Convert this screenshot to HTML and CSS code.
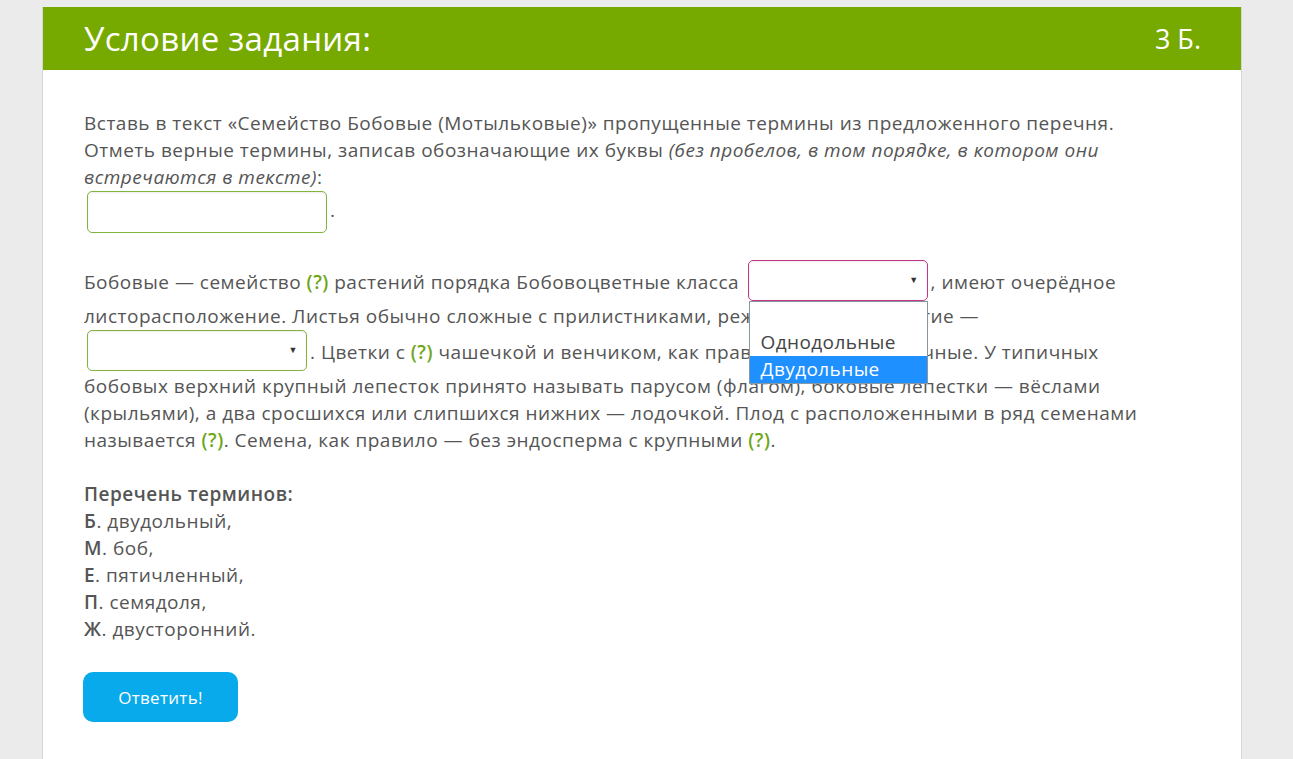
FILE: index.html
```html
<!DOCTYPE html>
<html lang="ru">
<head>
    <meta charset="UTF-8">
    <meta name="viewport" content="width=device-width, initial-scale=1.0">
    <title>Условие задания</title>
    <link rel="stylesheet" href="styles.css">
</head>
<body>
    <div class="task">
        <div class="task-head">
            <h1 class="task-title">Условие задания:</h1>
            <div class="task-score">3 Б.</div>
        </div>

        <div class="task-body">
            <p>
                Вставь в текст «Семейство Бобовые (Мотыльковые)» пропущенные термины из предложенного перечня.<br>
                Отметь верные термины, записав обозначающие их буквы <em>(без пробелов, в том порядке, в котором они встречаются в тексте)</em>:<br>
                <input type="text" class="answer-input">.
            </p>

            <p>
                Бобовые — семейство <span class="gap">(?)</span> растений порядка Бобовоцветные класса
                <span class="select-wrap">
                    <select class="gap-select gap-select-active" style="width: 180px;">
                        <option></option>
                        <option>Однодольные</option>
                        <option>Двудольные</option>
                    </select>
                    <span class="select-arrow">▼</span>
                    <!-- раскрытый список -->
                    <span class="dropdown">
                        <span class="dropdown-item"></span>
                        <span class="dropdown-item">Однодольные</span>
                        <span class="dropdown-item dropdown-item-hover">Двудольные</span>
                    </span>
                </span>, имеют очерёдное листорасположение. Листья обычно сложные с прилистниками, реже простые. Развитие —
                <span class="select-wrap">
                    <select class="gap-select" style="width: 220px;">
                        <option></option>
                    </select>
                    <span class="select-arrow">▼</span>
                </span>. Цветки с <span class="gap">(?)</span> чашечкой и венчиком, как правило, <span class="gap">(?)</span> симметричные. У типичных бобовых верхний крупный лепесток принято называть парусом (флагом), боковые лепестки — вёслами (крыльями), а два сросшихся или слипшихся нижних — лодочкой. Плод с расположенными в ряд семенами называется <span class="gap">(?)</span>. Семена, как правило — без эндосперма с крупными <span class="gap">(?)</span>.
            </p>

            <p>
                <b>Перечень терминов:</b><br>
                <b>Б</b>. двудольный,<br>
                <b>М</b>. боб,<br>
                <b>Е</b>. пятичленный,<br>
                <b>П</b>. семядоля,<br>
                <b>Ж</b>. двусторонний.
            </p>

            <button class="btn-answer">Ответить!</button>
        </div>
    </div>
</body>
</html>
```

FILE: styles.css
```css
* {
    margin: 0;
    padding: 0;
    box-sizing: border-box;
}

body {
    background: #ebebeb;
    font-family: "Open Sans", "Noto Sans", sans-serif;
    color: #555;
}

.task {
    width: 1200px;
    margin: 7px 0 0 42px;
    background: #fff;
    border-left: 1px solid #d6d6d6;
    border-right: 1px solid #d6d6d6;
    min-height: 760px;
}

/* шапка */
.task-head {
    display: flex;
    justify-content: space-between;
    align-items: center;
    height: 63px;
    padding: 0 40px 0 41px;
    background: #77aa00;
    color: #fff;
}
.task-title {
    font-size: 33px;
    font-weight: 400;
    letter-spacing: 0.3px;
}
.task-score {
    font-size: 27px;
}

/* текст задания */
.task-body {
    padding: 40px 60px 40px 41px;
    font-size: 19px;
    line-height: 27px;
    letter-spacing: 0.5px;
}
.task-body p {
    margin-bottom: 27px;
}
.task-body b {
    font-weight: 600;
}
.gap {
    color: #6ea617;
    font-weight: 600;
}

.answer-input {
    width: 240px;
    height: 42px;
    margin: 0 3px 0 3px;
    vertical-align: middle;
    border: 1px solid #82b33a;
    border-radius: 5px;
    box-shadow: inset 0 1px 2px rgba(0,0,0,0.08);
    font: inherit;
    padding: 0 10px;
}

.select-wrap {
    position: relative;
    display: inline-block;
    vertical-align: 8px;
    margin: 0 3px 2px;
    line-height: 0;
}
.gap-select {
    display: block;
    height: 41px;
    appearance: none;
    -webkit-appearance: none;
    background: #fff;
    border: 1px solid #82b33a;
    border-radius: 5px;
    box-shadow: inset 0 1px 2px rgba(0,0,0,0.08);
    font: inherit;
    color: #333;
    padding: 0 10px;
}
.gap-select-active {
    border-color: #c2368a;
}
.select-arrow {
    position: absolute;
    right: 9px;
    top: 14px;
    font-size: 9px;
    line-height: 12px;
    color: #333;
    pointer-events: none;
}

.dropdown {
    position: absolute;
    left: 1px;
    top: 41px;
    width: 179px;
    background: #fff;
    border: 1px solid #8a97a0;
    z-index: 10;
}
.dropdown-item {
    display: block;
    height: 27px;
    padding: 0 11px;
    line-height: 27px;
    font-size: 19px;
    letter-spacing: 0.4px;
    color: #444;
    white-space: nowrap;
}
.dropdown-item-hover {
    background: #1e90ff;
    color: #fff;
}

/* кнопка */
.btn-answer {
    margin-top: 2px;
    margin-left: -1px;
    width: 155px;
    height: 50px;
    border: none;
    border-radius: 10px;
    background: #08aaeb;
    color: #fff;
    font-family: "Open Sans", "Noto Sans", sans-serif;
    font-size: 17px;
    letter-spacing: 0.3px;
    cursor: pointer;
}
```
